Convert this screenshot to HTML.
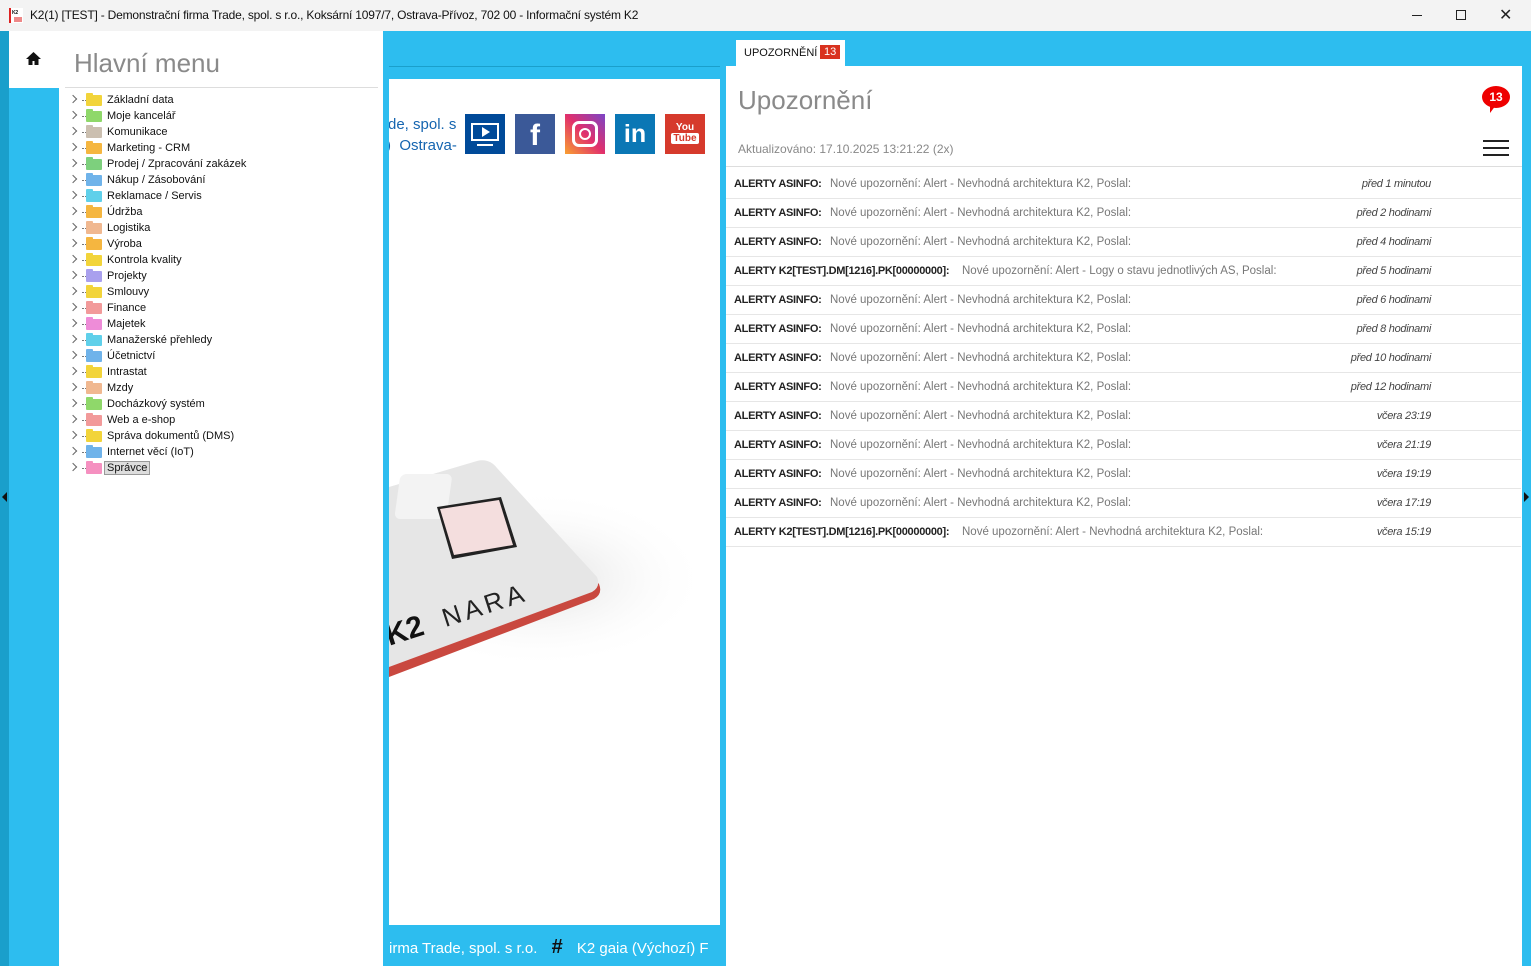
<!DOCTYPE html>
<html><head><meta charset="utf-8">
<style>
*{margin:0;padding:0;box-sizing:border-box}
body{width:1531px;height:966px;overflow:hidden;background:#2dbdef;font-family:"Liberation Sans",sans-serif;position:relative}
.abs{position:absolute}
#title{left:0;top:0;width:1531px;height:31px;background:#f3f3f3;font-size:12px;color:#111;letter-spacing:-0.2px}
#title .t{left:30px;top:8px;white-space:nowrap}
.tree{left:65px;top:92px;font-size:11px;color:#111}
.tree div{height:16px;line-height:16px;position:relative;padding-left:42px;white-space:nowrap}
.tree .ch{position:absolute;left:5px;top:4px;width:6px;height:6px;border-right:1.3px solid #666;border-top:1.3px solid #666;transform:rotate(45deg)}
.tree .dot{position:absolute;left:17px;top:8px;width:4px;border-top:1px dotted #777}
.tree .f{position:absolute;left:21px;top:3px;width:16px;height:11px;border-radius:1px}
.tree .f:before{content:"";position:absolute;left:0;top:-2px;width:7px;height:3px;background:inherit;border-radius:1px 1px 0 0}
.rows{left:726px;top:170px;width:795px}
.row{height:29px;border-bottom:1px solid #e6e6e6;position:relative;font-size:11px;line-height:29px;letter-spacing:-0.3px;white-space:nowrap}
.row b{position:absolute;left:8px;color:#222}
.row span.m{color:#777;font-size:11.5px;letter-spacing:0}
.row i{position:absolute;right:90px;color:#444}
</style></head><body>
<div id="title" class="abs">
  <div class="abs" style="left:9px;top:8px;width:14px;height:15px;background:#fff;border-left:2px solid #d22"><div style="font-size:5px;font-weight:bold;margin:2px 0 0 1px">K2</div><div style="width:8px;height:5px;background:#e88;margin:1px 0 0 3px"></div></div>
  <div class="abs t">K2(1) [TEST] - Demonstrační firma Trade, spol. s r.o., Koksární 1097/7, Ostrava-Přívoz, 702 00 - Informační systém K2</div>
  <div class="abs" style="left:1412px;top:15px;width:10px;border-top:1px solid #222"></div>
  <div class="abs" style="left:1456px;top:10px;width:10px;height:10px;border:1px solid #222"></div>
  <div class="abs" style="left:1499px;top:5px;font-size:16px;color:#222">✕</div>
</div>
<div class="abs" style="left:0;top:31px;width:9px;height:935px;background:#1a9fcb"></div>
<div class="abs" style="left:9px;top:31px;width:374px;height:57px;background:#fff"></div>
<div class="abs" style="left:59px;top:88px;width:324px;height:878px;background:#fff"></div>
<svg class="abs" style="left:25px;top:51px" width="17" height="15" viewBox="0 0 17 15"><path d="M8.5 1L1 8h2.5v6h4v-4h2v4h4V8H16z" fill="#111"/></svg>
<div class="abs" style="left:74px;top:48px;font-size:26px;color:#8a8a8a">Hlavní menu</div>
<div class="abs" style="left:65px;top:87px;width:313px;border-top:1px solid #ddd"></div>
<div class="abs tree">
<div><span class="ch"></span><span class="dot"></span><span class="f" style="background:#f2d43a"></span>Základní data</div>
<div><span class="ch"></span><span class="dot"></span><span class="f" style="background:#8fd86a"></span>Moje kancelář</div>
<div><span class="ch"></span><span class="dot"></span><span class="f" style="background:#cbbfb0"></span>Komunikace</div>
<div><span class="ch"></span><span class="dot"></span><span class="f" style="background:#f5b640"></span>Marketing - CRM</div>
<div><span class="ch"></span><span class="dot"></span><span class="f" style="background:#7dd07d"></span>Prodej / Zpracování zakázek</div>
<div><span class="ch"></span><span class="dot"></span><span class="f" style="background:#6fb3ea"></span>Nákup / Zásobování</div>
<div><span class="ch"></span><span class="dot"></span><span class="f" style="background:#5fd0ea"></span>Reklamace / Servis</div>
<div><span class="ch"></span><span class="dot"></span><span class="f" style="background:#f5b640"></span>Údržba</div>
<div><span class="ch"></span><span class="dot"></span><span class="f" style="background:#f0b890"></span>Logistika</div>
<div><span class="ch"></span><span class="dot"></span><span class="f" style="background:#f5b640"></span>Výroba</div>
<div><span class="ch"></span><span class="dot"></span><span class="f" style="background:#f2d43a"></span>Kontrola kvality</div>
<div><span class="ch"></span><span class="dot"></span><span class="f" style="background:#a9a0ee"></span>Projekty</div>
<div><span class="ch"></span><span class="dot"></span><span class="f" style="background:#f2d43a"></span>Smlouvy</div>
<div><span class="ch"></span><span class="dot"></span><span class="f" style="background:#f29a9a"></span>Finance</div>
<div><span class="ch"></span><span class="dot"></span><span class="f" style="background:#ee8cd8"></span>Majetek</div>
<div><span class="ch"></span><span class="dot"></span><span class="f" style="background:#5fd0ea"></span>Manažerské přehledy</div>
<div><span class="ch"></span><span class="dot"></span><span class="f" style="background:#6fb3ea"></span>Účetnictví</div>
<div><span class="ch"></span><span class="dot"></span><span class="f" style="background:#f2d43a"></span>Intrastat</div>
<div><span class="ch"></span><span class="dot"></span><span class="f" style="background:#f0b890"></span>Mzdy</div>
<div><span class="ch"></span><span class="dot"></span><span class="f" style="background:#8fd86a"></span>Docházkový systém</div>
<div><span class="ch"></span><span class="dot"></span><span class="f" style="background:#f29a9a"></span>Web a e-shop</div>
<div><span class="ch"></span><span class="dot"></span><span class="f" style="background:#f2d43a"></span>Správa dokumentů (DMS)</div>
<div><span class="ch"></span><span class="dot"></span><span class="f" style="background:#6fb3ea"></span>Internet věcí (IoT)</div>
<div><span class="ch"></span><span class="dot"></span><span class="f" style="background:#f590c0"></span><span style="background:#ddd;border:1px solid #999;padding:0 2px;margin-left:-3px">Správce</span></div>
</div>
<div class="abs" style="left:389px;top:66px;width:331px;border-top:1px solid #1a9fcb"></div>
<div class="abs" style="left:389px;top:79px;width:331px;height:846px;background:#fff;overflow:hidden">
  <div class="abs" style="left:-1px;top:37px;font-size:15px;color:#1565b0;white-space:nowrap">de, spol. s</div>
  <div class="abs" style="left:-3px;top:58px;font-size:15px;color:#1565b0;white-space:nowrap">)&nbsp; Ostrava-</div>
  <div class="abs" style="left:76px;top:35px;width:40px;height:40px;background:#004a99"><div class="abs" style="left:6px;top:9px;width:28px;height:18px;border:2px solid #fff"></div><div class="abs" style="left:17px;top:13px;border-left:8px solid #fff;border-top:5px solid transparent;border-bottom:5px solid transparent"></div><div class="abs" style="left:12px;top:30px;width:16px;border-top:2px solid #fff"></div></div>
  <div class="abs" style="left:126px;top:35px;width:40px;height:40px;background:#3b5998;color:#fff;font:bold 30px 'Liberation Sans';text-align:center;line-height:44px">f</div>
  <div class="abs" style="left:176px;top:35px;width:40px;height:40px;background:linear-gradient(45deg,#f9a030,#e1306c 50%,#7a45c8)"><div class="abs" style="left:7px;top:7px;width:26px;height:26px;border:3px solid #fff;border-radius:7px"></div><div class="abs" style="left:14px;top:14px;width:12px;height:12px;border:2.5px solid #fff;border-radius:50%"></div></div>
  <div class="abs" style="left:226px;top:35px;width:40px;height:40px;background:#0a77b5;color:#fff;font:bold 25px 'Liberation Sans';text-align:center;line-height:40px">in</div>
  <div class="abs" style="left:276px;top:35px;width:40px;height:40px;background:#d63a2c;color:#fff;font:bold 10px 'Liberation Sans';text-align:center;line-height:11px;padding-top:8px">You<br><span style="background:#fff;color:#d63a2c;border-radius:2px;padding:0 2px">Tube</span></div>
  <svg class="abs" style="left:0;top:370px" width="331" height="240">
    <defs><radialGradient id="sh" cx="0.5" cy="0.5" r="0.5"><stop offset="0" stop-color="#ccc"/><stop offset="1" stop-color="#fff" stop-opacity="0"/></radialGradient></defs>
    <ellipse cx="150" cy="130" rx="170" ry="90" fill="url(#sh)" opacity="0.6"/>
    <path d="M0 42 L88 15 Q100 12 108 22 L210 135 Q214 145 205 150 L0 228 Z" fill="#c9483f"/>
    <path d="M0 38 L88 12 Q100 9 108 19 L208 128 Q212 138 203 143 L0 218 Z" fill="#e6e6e6"/>
    <rect x="15" y="25" width="52" height="45" rx="6" fill="#f3f3f3" transform="skewX(-8)"/>
    <path d="M48 58 L112 48 L128 98 L63 110 Z" fill="#222"/><path d="M51 60 L110 51 L124 96 L65 106 Z" fill="#f4dede"/>
    <text x="-4" y="190" font-family="Liberation Sans" font-weight="bold" font-size="30" fill="#111" transform="rotate(-18 20 180)">K2</text>
    <text x="52" y="170" font-family="Liberation Sans" font-size="26" fill="#222" letter-spacing="4" transform="rotate(-18 80 160)">NARA</text>
  </svg>
</div>
<div class="abs" style="left:389px;top:936px;font-size:15px;color:#fff;white-space:nowrap">irma Trade, spol. s r.o. <b style="color:#111;font-size:20px;margin:0 10px">#</b> K2 gaia (Výchozí) F</div>
<div class="abs" style="left:736px;top:40px;width:109px;height:27px;background:#fff;font-size:11px;color:#111"><span class="abs" style="left:8px;top:7px">UPOZORNĚNÍ</span><span class="abs" style="left:84px;top:5px;background:#d9321f;color:#fff;padding:1px 4px;font-size:11px">13</span></div>
<div class="abs" style="left:726px;top:66px;width:796px;height:900px;background:#fff"></div>
<div class="abs" style="left:738px;top:85px;font-size:26px;color:#8a8a8a">Upozornění</div>
<div class="abs" style="left:738px;top:142px;font-size:12px;color:#888">Aktualizováno: 17.10.2025 13:21:22 (2x)</div>
<div class="abs" style="left:1482px;top:86px;width:28px;height:22px;background:#e00;border-radius:50%;color:#fff;font:bold 12px 'Liberation Sans';text-align:center;line-height:22px">13</div>
<div class="abs" style="left:1490px;top:105px;border-top:8px solid #e00;border-right:6px solid transparent"></div>
<div class="abs" style="left:1483px;top:140px;width:26px;height:2px;background:#222"></div>
<div class="abs" style="left:1483px;top:147px;width:26px;height:2px;background:#222"></div>
<div class="abs" style="left:1483px;top:154px;width:26px;height:2px;background:#222"></div>
<div class="abs" style="left:726px;top:166px;width:796px;border-top:1px solid #ddd"></div>
<div class="abs rows">
<div class="row"><b>ALERTY ASINFO:</b><span class="m" style="position:absolute;left:104px">Nové upozornění: Alert - Nevhodná architektura K2, Poslal:</span><i>před 1 minutou</i></div>
<div class="row"><b>ALERTY ASINFO:</b><span class="m" style="position:absolute;left:104px">Nové upozornění: Alert - Nevhodná architektura K2, Poslal:</span><i>před 2 hodinami</i></div>
<div class="row"><b>ALERTY ASINFO:</b><span class="m" style="position:absolute;left:104px">Nové upozornění: Alert - Nevhodná architektura K2, Poslal:</span><i>před 4 hodinami</i></div>
<div class="row"><b>ALERTY K2[TEST].DM[1216].PK[00000000]:</b><span class="m" style="position:absolute;left:236px">Nové upozornění: Alert - Logy o stavu jednotlivých AS, Poslal:</span><i>před 5 hodinami</i></div>
<div class="row"><b>ALERTY ASINFO:</b><span class="m" style="position:absolute;left:104px">Nové upozornění: Alert - Nevhodná architektura K2, Poslal:</span><i>před 6 hodinami</i></div>
<div class="row"><b>ALERTY ASINFO:</b><span class="m" style="position:absolute;left:104px">Nové upozornění: Alert - Nevhodná architektura K2, Poslal:</span><i>před 8 hodinami</i></div>
<div class="row"><b>ALERTY ASINFO:</b><span class="m" style="position:absolute;left:104px">Nové upozornění: Alert - Nevhodná architektura K2, Poslal:</span><i>před 10 hodinami</i></div>
<div class="row"><b>ALERTY ASINFO:</b><span class="m" style="position:absolute;left:104px">Nové upozornění: Alert - Nevhodná architektura K2, Poslal:</span><i>před 12 hodinami</i></div>
<div class="row"><b>ALERTY ASINFO:</b><span class="m" style="position:absolute;left:104px">Nové upozornění: Alert - Nevhodná architektura K2, Poslal:</span><i>včera 23:19</i></div>
<div class="row"><b>ALERTY ASINFO:</b><span class="m" style="position:absolute;left:104px">Nové upozornění: Alert - Nevhodná architektura K2, Poslal:</span><i>včera 21:19</i></div>
<div class="row"><b>ALERTY ASINFO:</b><span class="m" style="position:absolute;left:104px">Nové upozornění: Alert - Nevhodná architektura K2, Poslal:</span><i>včera 19:19</i></div>
<div class="row"><b>ALERTY ASINFO:</b><span class="m" style="position:absolute;left:104px">Nové upozornění: Alert - Nevhodná architektura K2, Poslal:</span><i>včera 17:19</i></div>
<div class="row"><b>ALERTY K2[TEST].DM[1216].PK[00000000]:</b><span class="m" style="position:absolute;left:236px">Nové upozornění: Alert - Nevhodná architektura K2, Poslal:</span><i>včera 15:19</i></div>
</div>
<div class="abs" style="left:1524px;top:492px;border-left:5px solid #111;border-top:5px solid transparent;border-bottom:5px solid transparent"></div>
<div class="abs" style="left:2px;top:492px;border-right:5px solid #111;border-top:5px solid transparent;border-bottom:5px solid transparent"></div>
</body></html>
